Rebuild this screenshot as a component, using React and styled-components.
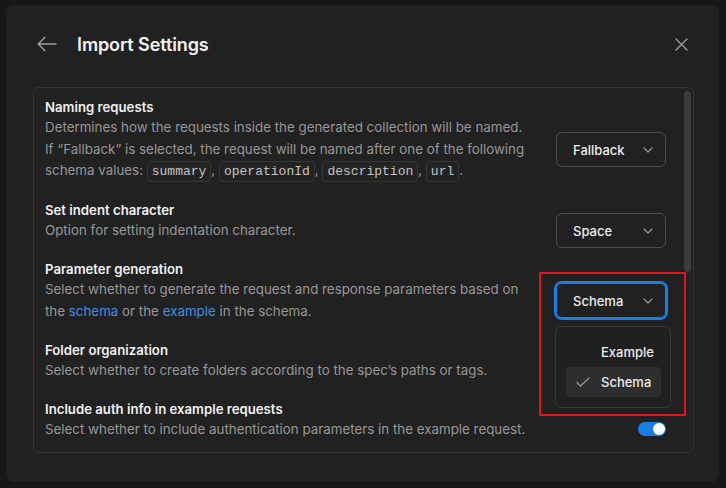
import React from 'react'
import styled, { createGlobalStyle } from 'styled-components'

const GlobalStyle = createGlobalStyle`
  html, body {
    margin: 0;
    background: #171717;
    font-family: Inter, "Noto Sans", sans-serif;
    -webkit-font-smoothing: antialiased;
  }
`

const Page = styled.div`
  box-sizing: border-box;
  height: 488px;
  padding: 5px 7px 6px 6px;
`

const Modal = styled.div`
  box-sizing: border-box;
  height: 477px;
  padding: 19px 25px 0 27px;
  background: #212121;
  border-radius: 8px;
`

const Header = styled.div`
  display: flex;
  align-items: center;
  height: 40px;
  margin-bottom: 23px;
  padding: 0 3px 0 4px;

  h1 {
    flex: 1;
    margin: 0 0 0 20px;
    font-size: 18px;
    font-weight: 600;
    color: #f2f2f2;
    letter-spacing: -0.1px;
  }
`

const IconButton = styled.span`
  display: flex;
  align-items: center;
  justify-content: center;
  width: 20px;
  height: 20px;
  color: #9c9c9c;
`

const Card = styled.div`
  display: flex;
  height: 366px;
  box-sizing: border-box;
  border: 1px solid #333333;
  border-radius: 6px;
`

const CardBody = styled.div`
  flex: 1;
  display: flex;
  flex-direction: column;
  gap: 17.5px;
  padding: 9px 18px 12px 11px;
`

const ScrollTrack = styled.div`
  width: 7px;
  padding-top: 3px;
  margin-right: 2px;

  div {
    height: 181px;
    background: #3b3b3b;
    border-radius: 4px;
  }
`

const SettingTitle = styled.div`
  font-size: 13.2px;
  font-weight: 600;
  line-height: 20px;
  color: #f0f0f0;
`

const SettingRow = styled.div`
  display: flex;
  align-items: center;
  gap: 24px;
`

const Desc = styled.div`
  flex: 1;
  font-size: 13.35px;
  line-height: 21.5px;
  color: #979797;

  a {
    color: #3d8fe8;
    text-decoration: none;
  }
`

const Code = styled.code`
  font-family: "Liberation Mono", "DejaVu Sans Mono", monospace;
  font-size: 13px;
  color: #c4c4c4;
  padding: 2px 4px;
  border: 1px solid #363636;
  border-radius: 4px;
  background: #232323;
`

/* the control is centred on the description and may spill over the gap */
const Control = styled.div`
  position: relative;
  display: flex;
  align-items: center;
  justify-content: flex-end;
  width: 110px;
  height: 21px;
`

const Select = styled.div`
  position: relative;
  flex: none;
  box-sizing: border-box;
  display: flex;
  align-items: center;
  justify-content: space-between;
  width: 110px;
  height: 35px;
  padding: 0 12px 0 16px;
  border: 1px solid ${p => (p.$focused ? '#1b7fe8' : '#4d4d4d')};
  box-shadow: ${p => (p.$focused ? '0 0 0 2px #1b7fe8' : 'none')};
  border-radius: 6px;
  font-size: 13px;
  font-weight: 500;
  color: #ececec;

  svg {
    color: #9a9a9a;
  }
`

const Menu = styled.div`
  position: absolute;
  top: 42px;
  left: -2px;
  box-sizing: border-box;
  width: 116px;
  padding: 10px 9px 10px 10px;
  background: #202020;
  border: 1px solid #383838;
  border-radius: 6px;
  z-index: 2;
`

const MenuItem = styled.div`
  display: flex;
  align-items: center;
  height: 30px;
  padding-left: 10px;
  border-radius: 4px;
  background: ${p => (p.$selected ? '#2e2e2e' : 'transparent')};
  font-size: 13px;
  font-weight: 500;
  color: #ececec;

  span {
    display: flex;
    width: 14px;
    margin-right: 11px;
    color: #9a9a9a;
  }
`

const Annotation = styled.div`
  position: absolute;
  top: -12px;
  left: -18px;
  width: 147px;
  height: 144px;
  box-sizing: border-box;
  border: 2px solid #e3131c;
  pointer-events: none;
  z-index: 3;
`

const Toggle = styled.div`
  display: flex;
  align-items: center;
  justify-content: ${p => (p.$on ? 'flex-end' : 'flex-start')};
  box-sizing: border-box;
  width: 28px;
  height: 14px;
  padding: 0 1px;
  border-radius: 7px;
  background: ${p => (p.$on ? '#1a7de6' : '#4a4a4a')};

  &::after {
    content: '';
    width: 12px;
    height: 12px;
    border-radius: 50%;
    background: #ffffff;
  }
`

const Chevron = () => (
  <svg width="10" height="6" viewBox="0 0 10 6" fill="none">
    <path d="M1 1l4 4 4-4" stroke="currentColor" strokeWidth="1.2" strokeLinecap="round" strokeLinejoin="round" />
  </svg>
)

const CheckMark = () => (
  <svg width="14" height="10" viewBox="0 0 14 10" fill="none">
    <path d="M1 5.5l3.5 3.5L13 1" stroke="currentColor" strokeWidth="1.2" strokeLinecap="round" strokeLinejoin="round" />
  </svg>
)

export default function App() {
  return (
    <Page>
      <GlobalStyle />
      <Modal>
        <Header>
          <IconButton>
            <svg width="20" height="16" viewBox="0 0 20 16" fill="none">
              <path d="M19 8H1.5M8 1.2L1.2 8 8 14.8" stroke="currentColor" strokeWidth="1.5" strokeLinecap="round" strokeLinejoin="round" />
            </svg>
          </IconButton>
          <h1>Import Settings</h1>
          <IconButton>
            <svg width="13" height="13" viewBox="0 0 13 13" fill="none">
              <path d="M1 1l11 11M12 1L1 12" stroke="currentColor" strokeWidth="1.4" strokeLinecap="round" />
            </svg>
          </IconButton>
        </Header>

        <Card>
          <CardBody>
            <div>
              <SettingTitle>Naming requests</SettingTitle>
              <SettingRow>
                <Desc>
                  Determines how the requests inside the generated collection will be named.
                  If “Fallback” is selected, the request will be named after one of the following
                  schema values: <Code>summary</Code>, <Code>operationId</Code>,{' '}
                  <Code>description</Code>, <Code>url</Code>.
                </Desc>
                <Control>
                  <Select>
                    Fallback <Chevron />
                  </Select>
                </Control>
              </SettingRow>
            </div>

            <div>
              <SettingTitle>Set indent character</SettingTitle>
              <SettingRow>
                <Desc>Option for setting indentation character.</Desc>
                <Control>
                  <Select>
                    Space <Chevron />
                  </Select>
                </Control>
              </SettingRow>
            </div>

            <div>
              <SettingTitle>Parameter generation</SettingTitle>
              <SettingRow>
                <Desc>
                  Select whether to generate the request and response parameters based on
                  the <a href="#">schema</a> or the <a href="#">example</a> in the schema.
                </Desc>
                <Control>
                  <Select $focused>
                    Schema <Chevron />
                    <Menu>
                      <MenuItem>
                        <span />
                        Example
                      </MenuItem>
                      <MenuItem $selected>
                        <span>
                          <CheckMark />
                        </span>
                        Schema
                      </MenuItem>
                    </Menu>
                    <Annotation />
                  </Select>
                </Control>
              </SettingRow>
            </div>

            <div>
              <SettingTitle>Folder organization</SettingTitle>
              <SettingRow>
                <Desc>Select whether to create folders according to the spec’s paths or tags.</Desc>
              </SettingRow>
            </div>

            <div>
              <SettingTitle>Include auth info in example requests</SettingTitle>
              <SettingRow>
                <Desc>Select whether to include authentication parameters in the example request.</Desc>
                <Control>
                  <Toggle $on />
                </Control>
              </SettingRow>
            </div>
          </CardBody>
          <ScrollTrack>
            <div />
          </ScrollTrack>
        </Card>
      </Modal>
    </Page>
  )
}
